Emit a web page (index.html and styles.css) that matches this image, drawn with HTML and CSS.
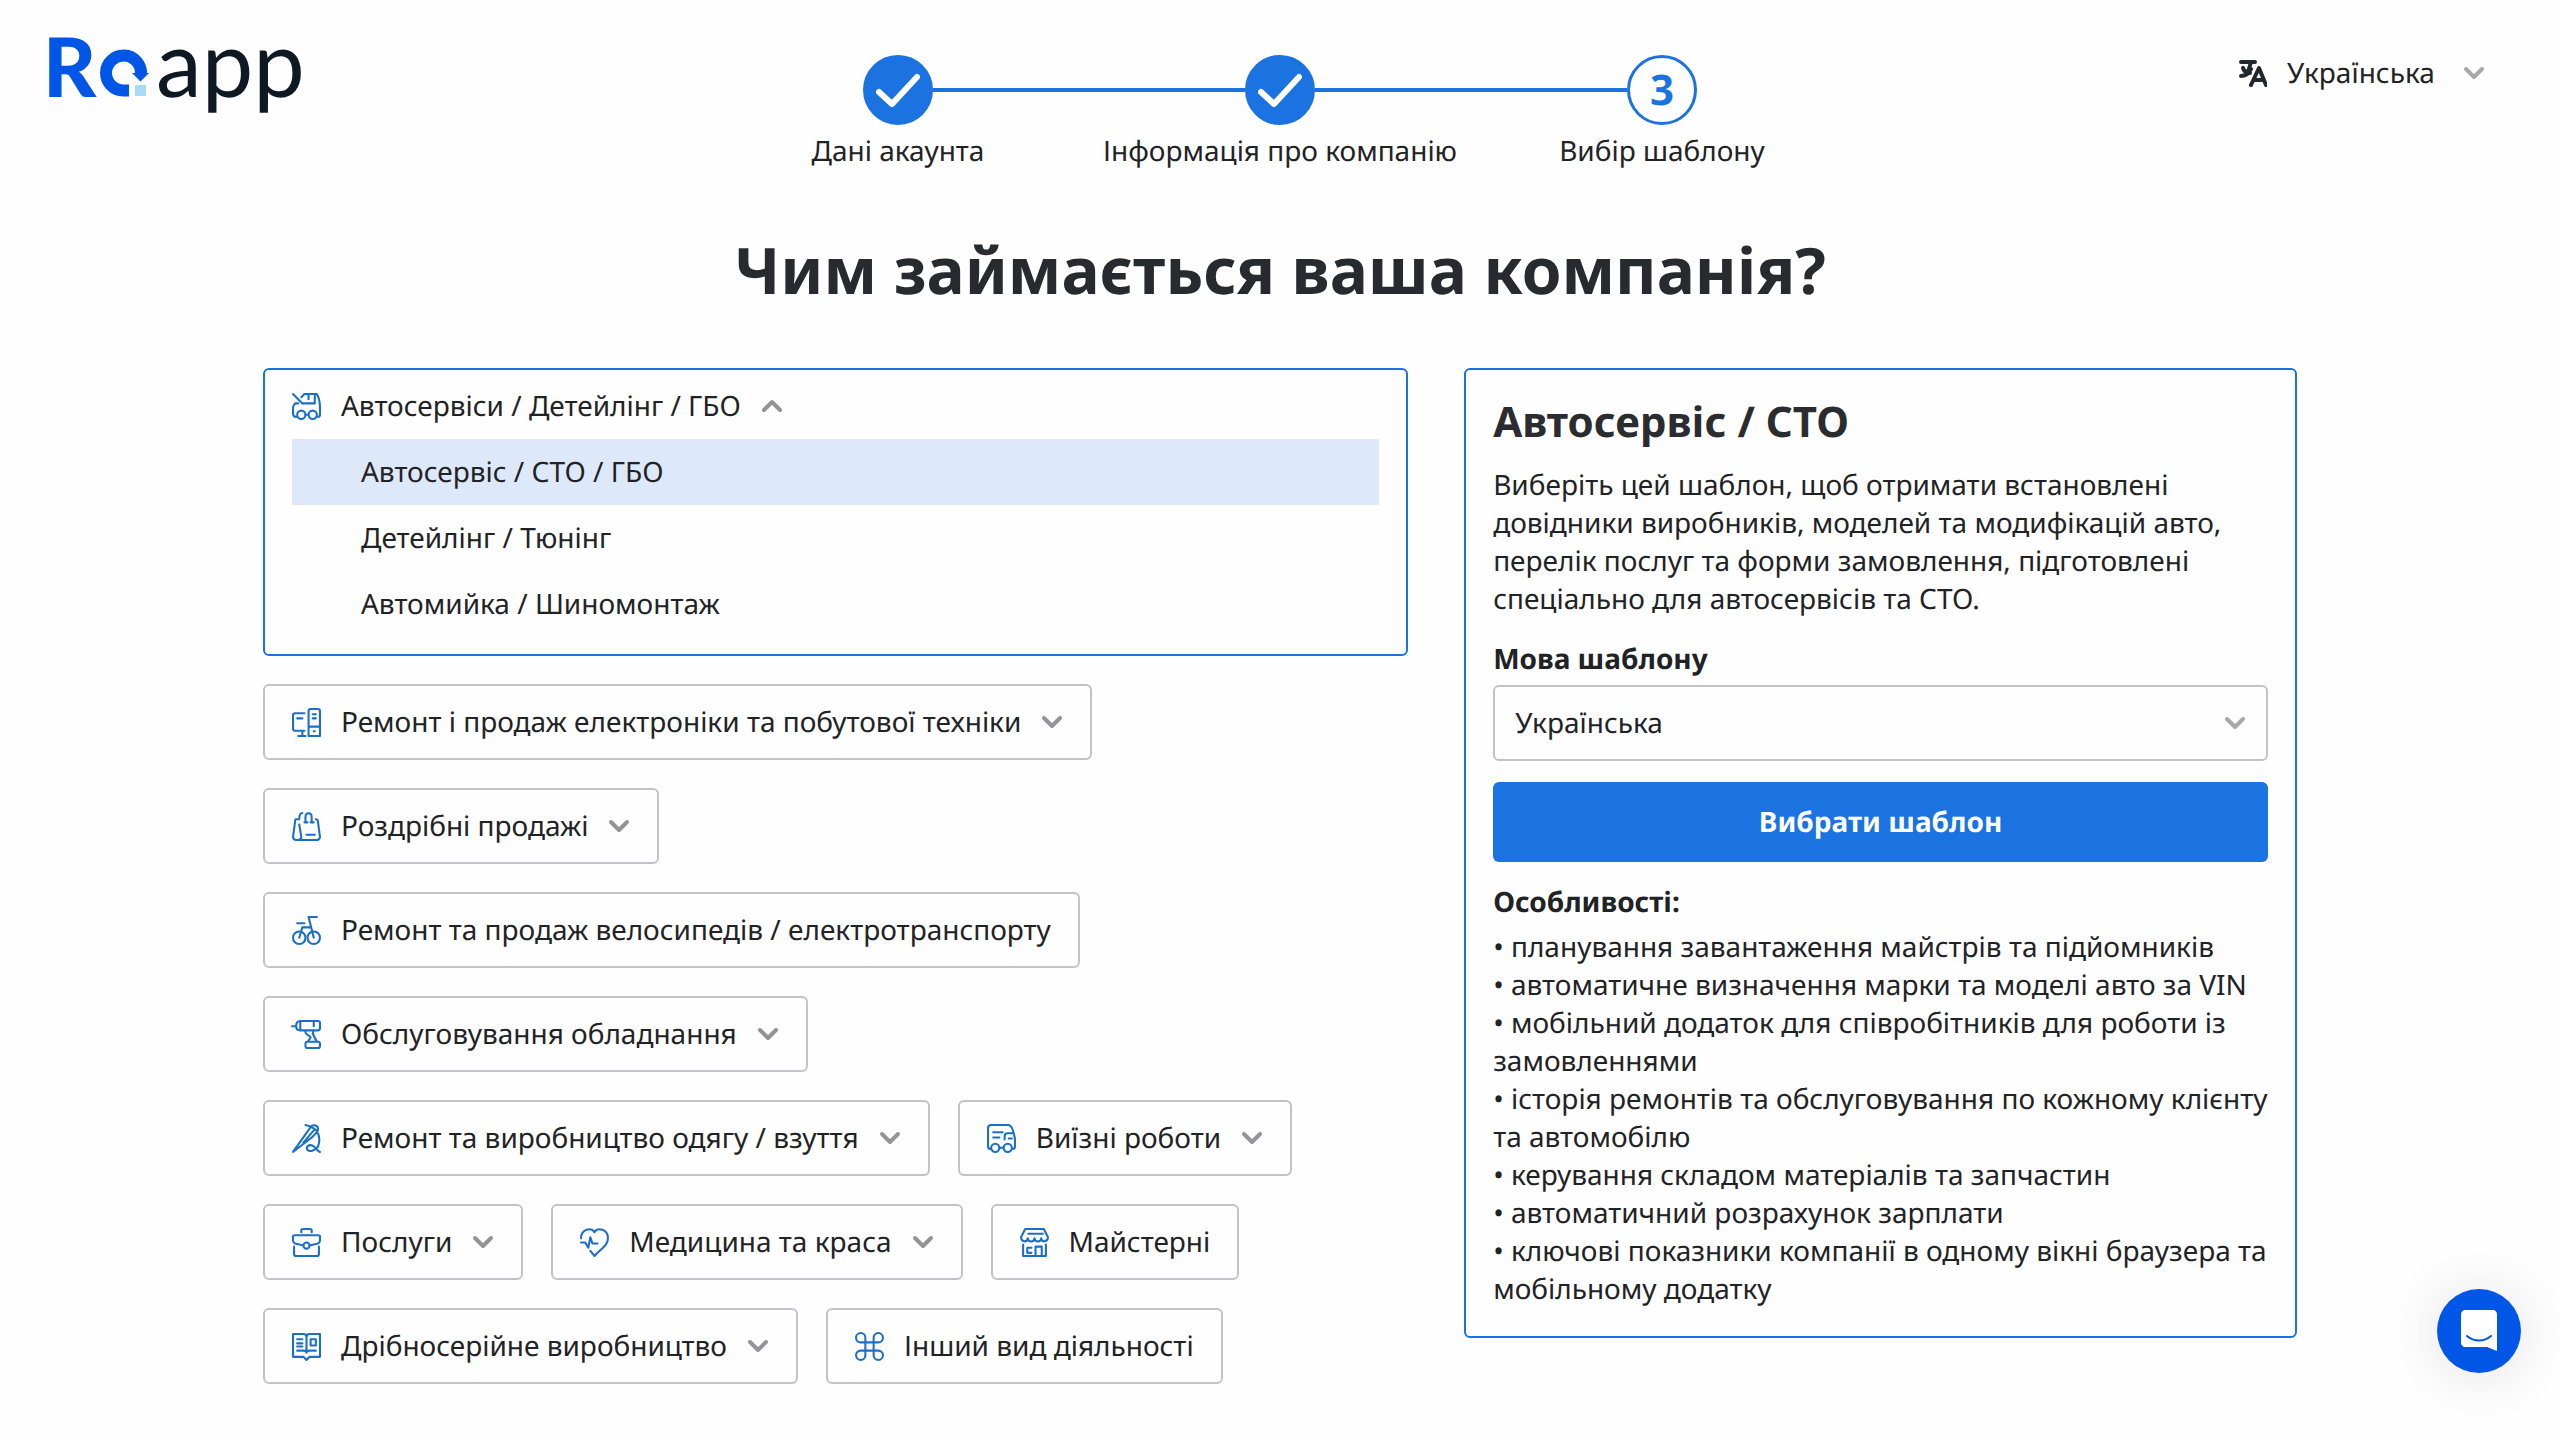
FILE: index.html
```html
<!DOCTYPE html>
<html lang="uk">
<head>
    <meta charset="UTF-8">
    <meta name="viewport" content="width=device-width, initial-scale=1">
    <title>RO App</title>
    <link rel="stylesheet" href="styles.css">
</head>
<body>

<!-- shared chevron -->
<svg class="sprite" aria-hidden="true">
    <symbol id="chevron" viewBox="0 0 22 14">
        <path d="M3 3l8 8 8-8"/>
    </symbol>
</svg>

<header class="header">
    <a class="logo" href="#" aria-label="RO App">
        <svg viewBox="0 0 260 100" width="260" height="100">
            <text class="logo-mark" x="-5" y="60">R</text>
            <path d="M81 53.500H75.500A17.500 17.500 0 1 1 93 37" fill="none" stroke="#0057e7" stroke-width="12"/>
            <path d="M84 36h17l-8.500 8.500z" fill="#0057e7"/>
            <rect x="87" y="48" width="11" height="11" fill="#a9d9f5"/>
            <text class="logo-app" x="108" y="60">app</text>
        </svg>
    </a>

    <ol class="steps">
        <li class="step">
            <span class="step-circle done"><svg viewBox="0 0 44 34"><path d="M3 19l13 12L41 4"/></svg></span>
            <span class="step-label">Дані акаунта</span>
        </li>
        <li class="step">
            <span class="step-circle done"><svg viewBox="0 0 44 34"><path d="M3 19l13 12L41 4"/></svg></span>
            <span class="step-label">Інформація про компанію</span>
        </li>
        <li class="step">
            <span class="step-circle">3</span>
            <span class="step-label">Вибір шаблону</span>
        </li>
    </ol>

    <div class="language">
        <svg class="language-icon" viewBox="0 0 28 28"><path d="M2 3h14M12 3L9 13M2 17c5 0 8-3 10-7M4 9c1 3 4 5 7 5M12 26l8-17 7 17M15 21h9"/></svg>
        <select class="language-select" aria-label="Мова">
            <option>Українська</option>
        </select>
        <svg class="chevron light"><use href="#chevron"/></svg>
    </div>
</header>

<main class="main">
    <h1 class="title">Чим займається ваша компанія?</h1>

    <div class="columns">
        <!-- business types -->
        <div class="categories">
            <section class="category-open">
                <button class="category-head" type="button" aria-expanded="true">
                    <svg class="icon" viewBox="0 0 28 28"><path d="M1 2l9 9h12V2M9 5l3-3h12c2 3 3 8 3 13v7c0 1-1 2-2 2M16 2v5M6 11H3c-1 1-2 2-2 4v6c0 2 1 3 3 3M13 22h3"/><circle cx="9" cy="22" r="4"/><circle cx="20" cy="22" r="4"/></svg>
                    <span>Автосервіси / Детейлінг / ГБО</span>
                    <svg class="chevron up"><use href="#chevron"/></svg>
                </button>
                <ul class="options">
                    <li><button class="option selected" type="button">Автосервіс / СТО / ГБО</button></li>
                    <li><button class="option" type="button">Детейлінг / Тюнінг</button></li>
                    <li><button class="option" type="button">Автомийка / Шиномонтаж</button></li>
                </ul>
            </section>

            <button class="category" type="button">
                <svg class="icon" viewBox="0 0 28 28"><path d="M12 5H3c-1 0-2 1-2 2v13c0 1 1 2 2 2h9M5 10h5M10 22v5M6 27h7M18 1h7c1 0 2 1 2 2v24H16V3c0-1 1-2 2-2zM16 18h11M20 6h3M20 10h3M21 22.500h1"/></svg>
                <span>Ремонт і продаж електроніки та побутової техніки</span>
                <svg class="chevron"><use href="#chevron"/></svg>
            </button>

            <button class="category" type="button">
                <svg class="icon" viewBox="0 0 28 28"><path d="M10 1C8 1 7 3 7 7H4C3 7 3 8 3 9L1 24c0 2 1 3 3 3h20c2 0 3-1 3-3L25 9c0-1-1-2-2-2M7 12l2 12c0 2-1 3-3 3M13 10V5c0-5 6-5 6 0v5M12 10h3M18 10h3M14 22h8"/></svg>
                <span>Роздрібні продажі</span>
                <svg class="chevron"><use href="#chevron"/></svg>
            </button>

            <button class="category" type="button">
                <svg class="icon" viewBox="0 0 28 28"><circle cx="7" cy="21" r="6"/><circle cx="21" cy="21" r="6"/><path d="M5 7h7M24 1h-8l5 20M7 21l3-10h8"/></svg>
                <span>Ремонт та продаж велосипедів / електротранспорту</span>
            </button>

            <button class="category" type="button">
                <svg class="icon" viewBox="0 0 28 28"><path d="M0 6h4M8 1C5 1 4 3 4 6s1 4 4 4M8 1h17c1 0 2 1 2 2v5c0 1-1 2-2 2H8M8 1v9M21 1v5M13 10v2c0 2 5 3 5 5l-3 4M21 10l-1 3 4 8M15 21h10c1 0 2 1 2 2v2c0 1-1 2-2 2H15c-1 0-2-1-2-2v-2c0-1 1-2 2-2z"/></svg>
                <span>Обслуговування обладнання</span>
                <svg class="chevron"><use href="#chevron"/></svg>
            </button>

            <button class="category" type="button">
                <svg class="icon" viewBox="0 0 28 28"><path d="M1 27L18 3c2-3 8-2 7 3-1 3-4 5-6 7zM11 18L22 5M13 1c4 1 8 2 11 6 3 5 3 10 1 15-3 4-8 5-10 3s1-6 5-4c3 1 4 5 7 6"/></svg>
                <span>Ремонт та виробництво одягу / взуття</span>
                <svg class="chevron"><use href="#chevron"/></svg>
            </button>

            <button class="category" type="button">
                <svg class="icon" viewBox="0 0 28 28"><path d="M4 24H3c-1 0-2-1-2-2V4c0-2 1-3 3-3h16c3 0 4 2 5 5l2 8v8c0 1-1 2-2 2M12 23h4M6 8h9M6 13h6M17 15v-3c0-2 1-3 3-3h5M21 14h3"/><circle cx="8" cy="23" r="4"/><circle cx="20" cy="23" r="4"/></svg>
                <span>Виїзні роботи</span>
                <svg class="chevron"><use href="#chevron"/></svg>
            </button>

            <button class="category" type="button">
                <svg class="icon" viewBox="0 0 28 28"><path d="M9 4V2c0-1 1-1 2-1h6c1 0 2 0 2 1v2M11 17L3 15c-1-1-2-1-2-3V8c0-1 1-1 2-1h22c1 0 2 0 2 1v4c0 2-1 2-2 3l-8 2M2 18v7c0 1 1 2 2 2h20c1 0 2-1 2-2v-7"/><circle cx="14" cy="17" r="3"/></svg>
                <span>Послуги</span>
                <svg class="chevron"><use href="#chevron"/></svg>
            </button>

            <button class="category" type="button">
                <svg class="icon" viewBox="0 0 28 28"><path d="M1 10C1 1 11-1 14 4c3-5 13-3 13 6 0 7-7 10-13 17l-4-5M1 14h4l3 5 2-10 2 6h5"/></svg>
                <span>Медицина та краса</span>
                <svg class="chevron"><use href="#chevron"/></svg>
            </button>

            <button class="category" type="button">
                <svg class="icon" viewBox="0 0 28 28"><path d="M5 1h18l4 8c0 5-6 5-6.500 1 0 4-6.500 4-6.500 0 0 4-6.500 4-6.500 0C7 14 1 14 1 9zM8 5.500h14M3 16v11h22V16M11 19H7v5h4M15 27v-9h6v9"/></svg>
                <span>Майстерні</span>
            </button>

            <button class="category" type="button">
                <svg class="icon" viewBox="0 0 28 28"><path d="M11 24H1V2h10c2 0 3 1 3 3 0-2 1-3 3-3h10v22H17l-3 3zM14 5v12M14 20c0-2-2-2-3-2H5M14 20c0-2 2-2 3-2h6M5 7h5M5 11h5M5 14h5M18 7h5v6h-5z"/></svg>
                <span>Дрібносерійне виробництво</span>
                <svg class="chevron"><use href="#chevron"/></svg>
            </button>

            <button class="category" type="button">
                <svg class="icon" viewBox="0 0 28 28"><path d="M10 10V5.500A4.500 4.500 0 1 0 5.500 10h17A4.500 4.500 0 1 0 18 5.500v17a4.500 4.500 0 1 0 4.500-4.500h-17A4.500 4.500 0 1 0 10 22.500z"/></svg>
                <span>Інший вид діяльності</span>
            </button>
        </div>

        <!-- selected template -->
        <aside class="template">
            <h2 class="template-title">Автосервіс / СТО</h2>
            <p class="template-text">Виберіть цей шаблон, щоб отримати встановлені довідники виробників, моделей та модифікацій авто, перелік послуг та форми замовлення, підготовлені спеціально для автосервісів та СТО.</p>

            <label class="label" for="template-language">Мова шаблону</label>
            <div class="select-box">
                <select class="select" id="template-language">
                    <option>Українська</option>
                </select>
                <svg class="chevron light"><use href="#chevron"/></svg>
            </div>

            <button class="btn" type="button">Вибрати шаблон</button>

            <h3 class="label">Особливості:</h3>
            <ul class="features">
                <li>• планування завантаження майстрів та підйомників</li>
                <li>• автоматичне визначення марки та моделі авто за VIN</li>
                <li>• мобільний додаток для співробітників для роботи із замовленнями</li>
                <li>• історія ремонтів та обслуговування по кожному клієнту та автомобілю</li>
                <li>• керування складом матеріалів та запчастин</li>
                <li>• автоматичний розрахунок зарплати</li>
                <li>• ключові показники компанії в одному вікні браузера та мобільному додатку</li>
            </ul>
        </aside>
    </div>
</main>

<button class="chat" type="button" aria-label="Чат">
    <svg viewBox="0 0 38 44" width="38" height="44">
        <path d="M5 1h28c2 0 4 2 4 4v37l-10-4H5c-2 0-4-2-4-4V5c0-2 2-4 4-4z" fill="#fff"/>
        <path d="M7 27c7 6 17 6 24 0" fill="none" stroke="#0057e7" stroke-width="2" stroke-linecap="round"/>
    </svg>
</button>

</body>
</html>
```
FILE: styles.css
```css
* {
    box-sizing: border-box;
}

body {
    margin: 0;
    font-family: "Noto Sans", "Open Sans", sans-serif;
    font-size: 28px;
    line-height: 38px;
    text-rendering: geometricPrecision;
    color: #1f2326;
    background: #fefefe;
}

button, select {
    font: inherit;
    color: inherit;
    text-rendering: inherit;
    cursor: pointer;
}

ul, ol {
    list-style: none;
    margin: 0;
    padding: 0;
}

.sprite {
    position: absolute;
    width: 0;
    height: 0;
}

/* header */
.header {
    display: grid;
    grid-template-columns: 1fr minmax(0, 1146px) 1fr;
    align-items: start;
    height: 171px;
    padding: 37px 48px 0;
}

.logo svg {
    display: block;
    overflow: visible;
}

.logo-mark {
    font-family: Lato, sans-serif;
    font-weight: 900;
    font-size: 82px;
    fill: #0057e7;
}

.logo-app {
    font-family: Lato, sans-serif;
    font-size: 92px;
    fill: #0f1923;
}

.steps {
    display: flex;
    padding-top: 18px;
}

.step {
    flex: 1;
    display: grid;
    grid-template-columns: 1fr 70px 1fr;
    align-items: center;
    row-gap: 7px;
}

.step::before, .step::after {
    content: "";
    grid-row: 1;
    height: 4px;
    background: #1a73e1;
}

.step::before {
    grid-column: 1;
}

.step::after {
    grid-column: 3;
}

.step:first-child::before, .step:last-child::after {
    background: none;
}

.step-circle {
    grid-column: 2;
    grid-row: 1;
    display: flex;
    align-items: center;
    justify-content: center;
    height: 70px;
    border: 3px solid #1a73e1;
    border-radius: 50%;
    font-size: 42px;
    font-weight: 700;
    color: #1a73e1;
}

.step-circle.done {
    background: #1a73e1;
}

.step-circle svg {
    width: 44px;
    height: 34px;
    fill: none;
    stroke: #fff;
    stroke-width: 6;
    stroke-linecap: round;
    stroke-linejoin: round;
}

.step-label {
    grid-column: 1 / 4;
    grid-row: 2;
    text-align: center;
}

.language {
    display: flex;
    align-items: center;
    justify-content: flex-end;
    padding: 17px 27px 0 0;
}

.language-icon {
    width: 28px;
    height: 28px;
    margin-right: 20px;
    fill: none;
    stroke: #22272b;
    stroke-width: 4;
    stroke-linecap: round;
    stroke-linejoin: round;
}

.language-select {
    appearance: none;
    padding: 0;
    margin-right: 28px;
    border: none;
    background: none;
}

.chevron {
    flex: none;
    width: 22px;
    height: 14px;
    fill: none;
    stroke: #949497;
    stroke-width: 4;
    stroke-linecap: round;
    stroke-linejoin: round;
}

.chevron.up {
    transform: rotate(180deg);
}

.chevron.light {
    stroke: #a8a8ab;
}

/* content */
.main {
    max-width: 2034px;
    margin: 0 auto;
}

.title {
    margin: 55px 0 54px;
    font-size: 64px;
    line-height: 88px;
    text-align: center;
    color: #272b2f;
}

.columns {
    display: grid;
    grid-template-columns: 11fr 8fr;
    gap: 56px;
    align-items: start;
}

.categories {
    display: flex;
    flex-wrap: wrap;
    gap: 28px;
}

.category, .category-head {
    display: flex;
    align-items: center;
    gap: 20px;
    text-align: left;
    background: none;
}

.category {
    padding: 17px 27px;
    border: 2px solid #c4c2c7;
    border-radius: 6px;
}

.category:hover {
    border-color: #1a73e1;
}

.category-open {
    width: 100%;
    padding: 17px 27px;
    border: 2px solid #1a73e1;
    border-radius: 6px;
}

.category-head {
    padding: 0;
    border: none;
}

.icon {
    flex: none;
    width: 29px;
    height: 29px;
    overflow: visible;
    fill: none;
    stroke: #1b6fc9;
    stroke-width: 2;
    stroke-linecap: round;
    stroke-linejoin: round;
}

.options {
    margin-top: 14px;
}

.option {
    display: block;
    width: 100%;
    padding: 14px 69px;
    border: none;
    background: none;
    text-align: left;
}

.option.selected {
    background: #dee8fb;
}

/* template panel */
.template {
    padding: 28px 27px;
    border: 2px solid #1a73e1;
    border-radius: 6px;
}

.template-title {
    margin: 0 0 20px;
    font-size: 42px;
    line-height: 48px;
    color: #2b2c30;
}

.template-text {
    margin: 0 0 22px;
}

.label {
    display: block;
    margin: 0 0 7px;
    font-size: 28px;
    font-weight: 700;
}

.select-box {
    position: relative;
    margin-bottom: 21px;
}

.select-box .chevron {
    position: absolute;
    top: 31px;
    right: 22px;
    pointer-events: none;
}

.select {
    appearance: none;
    display: block;
    width: 100%;
    padding: 17px 20px;
    border: 2px solid #c4c2c7;
    border-radius: 6px;
    background: none;
}

.btn {
    display: block;
    width: 100%;
    margin-bottom: 21px;
    padding: 21px;
    border: none;
    border-radius: 6px;
    background: #1a73e1;
    color: #fff;
    font-weight: 700;
}

/* chat */
.chat {
    position: fixed;
    right: 39px;
    bottom: 67px;
    display: flex;
    align-items: center;
    justify-content: center;
    width: 84px;
    height: 84px;
    padding: 0;
    border: none;
    border-radius: 50%;
    background: #0057e7;
    box-shadow: 0 2px 60px rgba(0, 0, 0, 0.12);
}
```
